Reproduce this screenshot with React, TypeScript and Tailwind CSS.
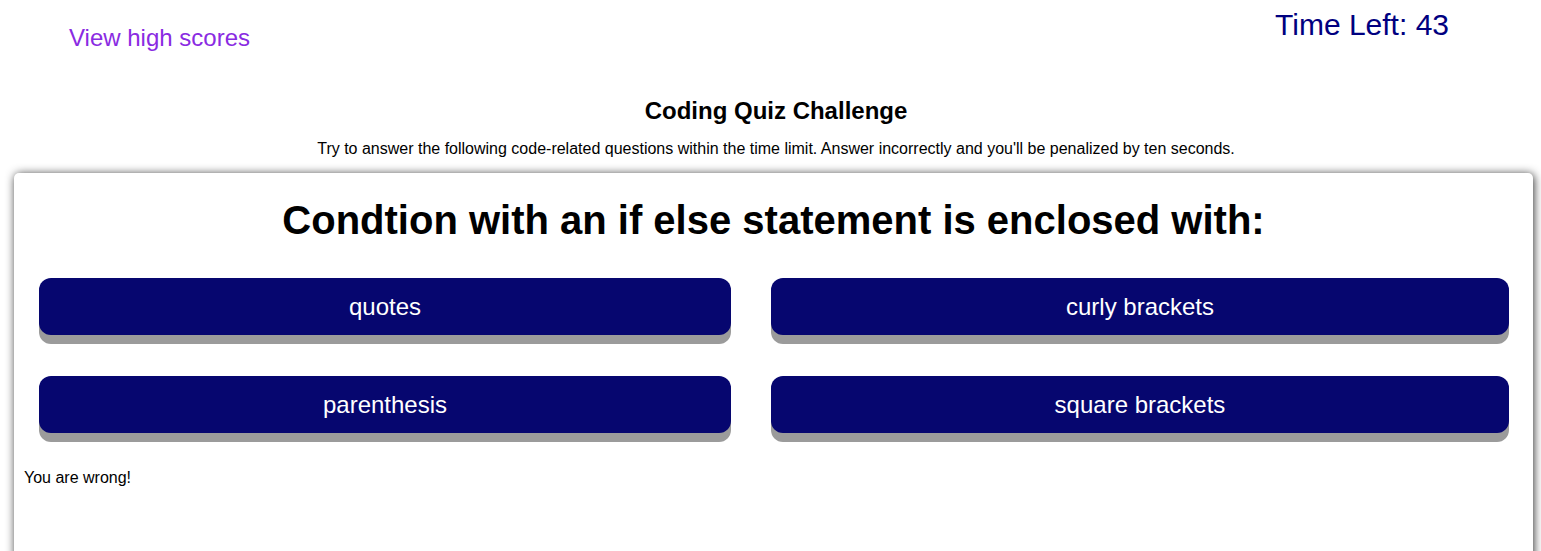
const answers = ['quotes', 'curly brackets', 'parenthesis', 'square brackets'];

export default function App() {
  return (
    <div className="min-h-[551px] bg-white font-['Liberation_Sans',Arial,sans-serif] text-black">
      {/* header */}
      <header className="flex items-start justify-between pl-[69px] pr-[92px]">
        <a href="#" className="mt-[24px] text-[24px] leading-[28px] text-[#8a2be2]">
          View high scores
        </a>
        <div className="mt-[8px] text-[30px] leading-[34px] text-[#000080]">Time Left: 43</div>
      </header>

      {/* intro */}
      <div className="mt-[45px] flex flex-col items-center pl-[11px]">
        <h2 className="text-[24px] font-bold leading-[28px]">Coding Quiz Challenge</h2>
        <p className="mt-[14px] text-[16px] leading-[20px]">
          Try to answer the following code-related questions within the time limit. Answer incorrectly and you'll be
          penalized by ten seconds.
        </p>
      </div>

      {/* question card */}
      <div className="ml-[14px] mr-[8px] mt-[14px] h-[400px] rounded-[5px] bg-white shadow-[1px_1px_10px_#333]">
        <h1 className="pt-[24px] text-center text-[40px] font-bold leading-[46px]">
          Condtion with an if else statement is enclosed with:
        </h1>
        <div className="mt-[35px] grid grid-cols-[692px_738px] gap-x-[40px] gap-y-[41px] pl-[25px]">
          {answers.map((a) => (
            <button
              key={a}
              className="h-[57px] rounded-[12px] bg-[#06066f] text-[24px] text-white shadow-[0_9px_0_#9b9b9b]"
            >
              {a}
            </button>
          ))}
        </div>
        <p className="mt-[36px] pl-[10px] text-[16px] leading-[18px]">You are wrong!</p>
      </div>
    </div>
  );
}
